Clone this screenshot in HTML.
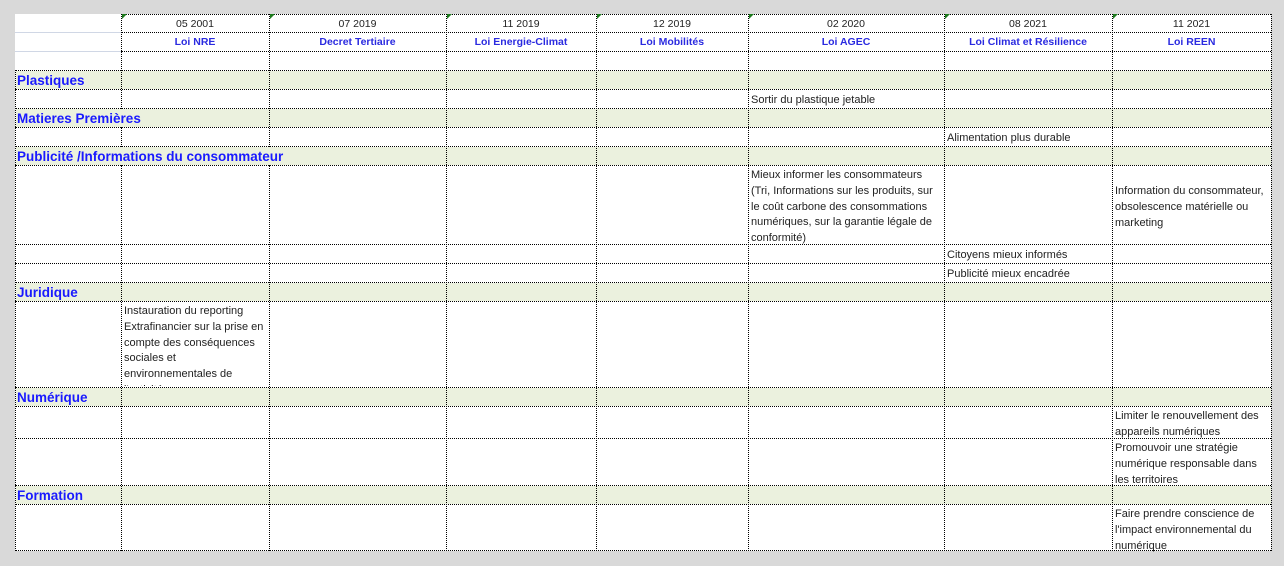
<!DOCTYPE html>
<html><head><meta charset="utf-8"><style>
body{margin:0;width:1284px;height:566px;background:#d9d9d9;position:relative;overflow:hidden;font-family:"Liberation Sans",sans-serif}
.a{position:absolute}
.sheet{left:15px;top:14px;width:1256px;height:537px;background:#fff}
.g{background:#ebf1de;left:16px;width:1255px;height:18px}
.v{width:0;border-left:1px dotted #000}
.h{height:0;border-top:1px dotted #000}
.t{font-size:11px;color:#222;line-height:15.8px;left:0;white-space:nowrap;margin-top:2px}
.sec{font-size:13.5px;font-weight:bold;color:#1a1aff;line-height:19px;left:17px}
.d{font-size:10.5px;color:#222;text-align:center;line-height:18px}
.l{font-size:10.5px;color:#2a2ae0;font-weight:bold;text-align:center;line-height:19px}
.tri{width:0;height:0;border-top:5px solid #1c7a1c;border-right:5px solid transparent}
</style></head><body>
<div class="a sheet"></div>
<div class="a g" style="top:71px"></div>
<div class="a g" style="top:109px"></div>
<div class="a g" style="top:147px"></div>
<div class="a g" style="top:283px"></div>
<div class="a g" style="top:388px"></div>
<div class="a g" style="top:486px"></div>
<div class="a" style="left:15px;top:32px;width:106px;height:1px;background:#d0d7e5"></div>
<div class="a" style="left:15px;top:51px;width:106px;height:1px;background:#d0d7e5"></div>
<div class="a h" style="left:121px;top:14px;width:1150px"></div>
<div class="a h" style="left:121px;top:32px;width:1150px"></div>
<div class="a h" style="left:121px;top:51px;width:1150px"></div>
<div class="a h" style="left:15px;top:70px;width:1256px"></div>
<div class="a h" style="left:15px;top:89px;width:1256px"></div>
<div class="a h" style="left:15px;top:108px;width:1256px"></div>
<div class="a h" style="left:15px;top:127px;width:1256px"></div>
<div class="a h" style="left:15px;top:146px;width:1256px"></div>
<div class="a h" style="left:15px;top:165px;width:1256px"></div>
<div class="a h" style="left:15px;top:244px;width:1256px"></div>
<div class="a h" style="left:15px;top:263px;width:1256px"></div>
<div class="a h" style="left:15px;top:282px;width:1256px"></div>
<div class="a h" style="left:15px;top:301px;width:1256px"></div>
<div class="a h" style="left:15px;top:387px;width:1256px"></div>
<div class="a h" style="left:15px;top:406px;width:1256px"></div>
<div class="a h" style="left:15px;top:438px;width:1256px"></div>
<div class="a h" style="left:15px;top:485px;width:1256px"></div>
<div class="a h" style="left:15px;top:504px;width:1256px"></div>
<div class="a h" style="left:15px;top:550px;width:1256px"></div>
<div class="a v" style="left:15px;top:70px;height:481px"></div>
<div class="a v" style="left:121px;top:14px;height:95px"></div>
<div class="a v" style="left:121px;top:127px;height:20px"></div>
<div class="a v" style="left:121px;top:165px;height:386px"></div>
<div class="a v" style="left:269px;top:14px;height:133px"></div>
<div class="a v" style="left:269px;top:165px;height:386px"></div>
<div class="a v" style="left:446px;top:14px;height:537px"></div>
<div class="a v" style="left:596px;top:14px;height:537px"></div>
<div class="a v" style="left:748px;top:14px;height:537px"></div>
<div class="a v" style="left:944px;top:14px;height:537px"></div>
<div class="a v" style="left:1112px;top:14px;height:537px"></div>
<div class="a v" style="left:1271px;top:14px;height:537px"></div>
<div class="a tri" style="left:122px;top:14px"></div>
<div class="a tri" style="left:270px;top:14px"></div>
<div class="a tri" style="left:447px;top:14px"></div>
<div class="a tri" style="left:597px;top:14px"></div>
<div class="a tri" style="left:749px;top:14px"></div>
<div class="a tri" style="left:945px;top:14px"></div>
<div class="a tri" style="left:1113px;top:14px"></div>
<div class="a d" style="left:121px;top:15px;width:148px">05 2001</div>
<div class="a d" style="left:269px;top:15px;width:177px">07 2019</div>
<div class="a d" style="left:446px;top:15px;width:150px">11 2019</div>
<div class="a d" style="left:596px;top:15px;width:152px">12 2019</div>
<div class="a d" style="left:748px;top:15px;width:196px">02 2020</div>
<div class="a d" style="left:944px;top:15px;width:168px">08 2021</div>
<div class="a d" style="left:1112px;top:15px;width:159px">11 2021</div>
<div class="a l" style="left:121px;top:33px;width:148px">Loi NRE</div>
<div class="a l" style="left:269px;top:33px;width:177px">Decret Tertiaire</div>
<div class="a l" style="left:446px;top:33px;width:150px">Loi Energie-Climat</div>
<div class="a l" style="left:596px;top:33px;width:152px">Loi Mobilités</div>
<div class="a l" style="left:748px;top:33px;width:196px">Loi AGEC</div>
<div class="a l" style="left:944px;top:33px;width:168px">Loi Climat et Résilience</div>
<div class="a l" style="left:1112px;top:33px;width:159px">Loi REEN</div>
<div class="a sec" style="top:71px">Plastiques</div>
<div class="a sec" style="top:109px">Matieres Premières</div>
<div class="a sec" style="top:147px">Publicité /Informations du consommateur</div>
<div class="a sec" style="top:283px">Juridique</div>
<div class="a sec" style="top:388px">Numérique</div>
<div class="a sec" style="top:486px">Formation</div>
<div class="a t" style="left:751px;top:91px">Sortir du plastique jetable</div>
<div class="a t" style="left:947px;top:129px">Alimentation plus durable</div>
<div class="a t" style="left:751px;top:166px">Mieux informer les consommateurs<br>(Tri, Informations sur les produits, sur<br>le coût carbone des consommations<br>numériques, sur la garantie légale de<br>conformité)</div>
<div class="a t" style="left:1115px;top:182px">Information du consommateur,<br>obsolescence matérielle ou<br>marketing</div>
<div class="a t" style="left:947px;top:246px">Citoyens mieux informés</div>
<div class="a t" style="left:947px;top:265px">Publicité mieux encadrée</div>
<div class="a t" style="left:124px;top:302px;height:82px;overflow:hidden">Instauration du reporting<br>Extrafinancier sur la prise en<br>compte des conséquences<br>sociales et<br>environnementales de<br>l'activité</div>
<div class="a t" style="left:1115px;top:407px">Limiter le renouvellement des<br>appareils numériques</div>
<div class="a t" style="left:1115px;top:439px">Promouvoir une stratégie<br>numérique responsable dans<br>les territoires</div>
<div class="a t" style="left:1115px;top:505px;height:45px;overflow:hidden">Faire prendre conscience de<br>l'impact environnemental du<br>numérique</div>
</body></html>
